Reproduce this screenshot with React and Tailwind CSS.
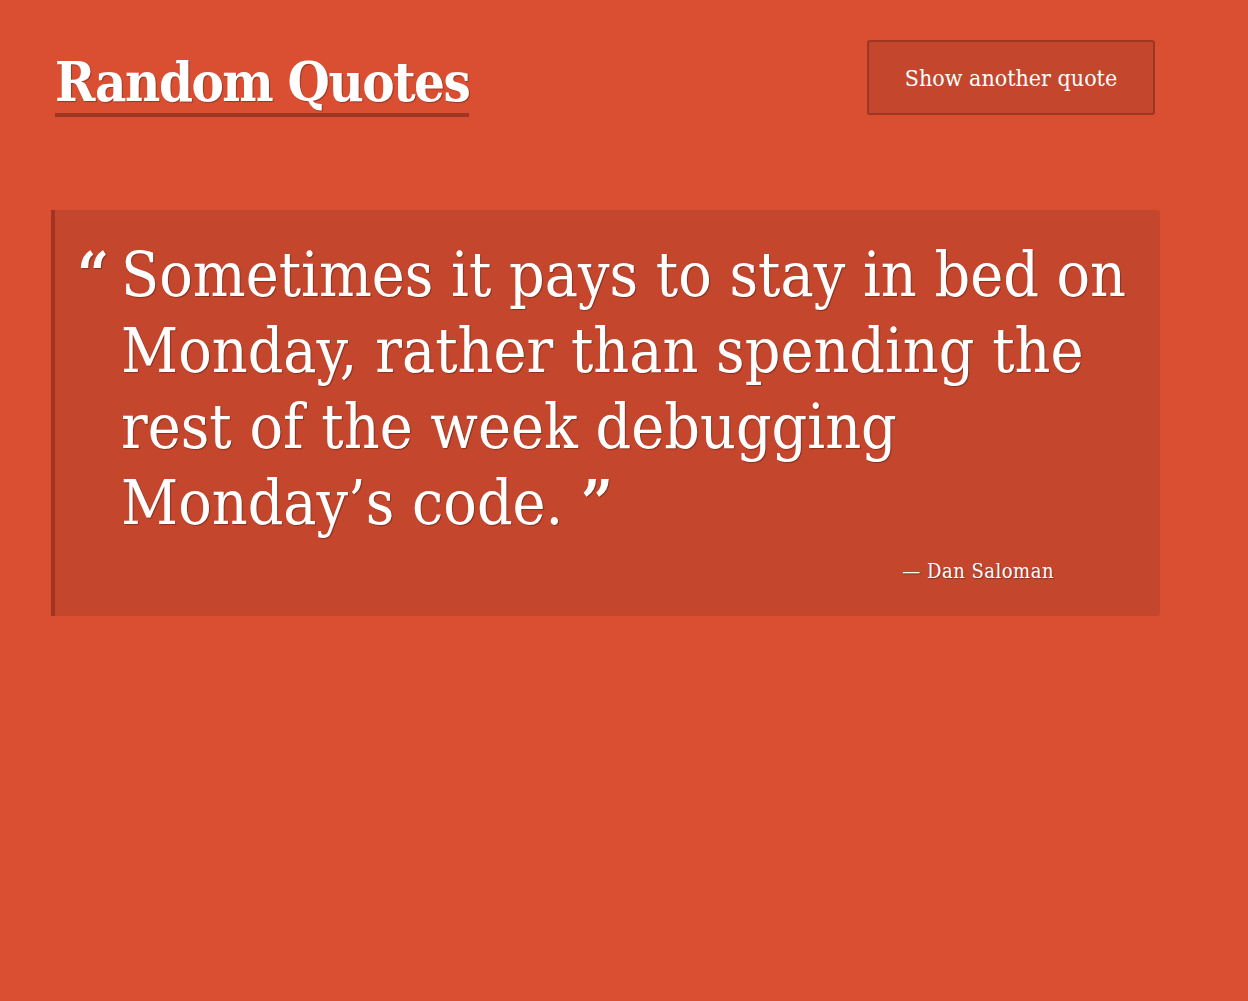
export default function App() {
  return (
    <div className="min-h-screen bg-[#da4f32] text-white font-['DejaVu_Serif_Condensed','DejaVu_Serif',serif] [text-shadow:1px_1px_1px_rgba(0,0,0,0.3)]">
      <div className="ml-[51px] w-[1109px] pt-[40px]">
        {/* HEADER */}
        <header className="flex items-start justify-between">
          <h1 className="ml-[4px] mt-[11px] border-b-4 border-[#9e3621] text-[54px] font-bold leading-[62px] tracking-[-1.5px]">
            Random Quotes
          </h1>
          <button className="mr-[5px] h-[75px] w-[288px] rounded-[3px] border-2 border-[#9e3621] bg-[#c3462d] pt-[2px] text-[23px] text-white">
            Show another quote
          </button>
        </header>

        {/* QUOTE */}
        <blockquote className="mt-[93px] rounded-r-[3px] border-l-4 border-[#9e3621] bg-[#c3462d] pb-[33px] pt-[27px]">
          <div className="flex">
            <span className="w-[66px] shrink-0 pl-[22px] text-[62px] font-bold leading-[76px]">
              “
            </span>
            <p className="whitespace-nowrap text-[62px] leading-[76px]">
              Sometimes it pays to stay in bed on
              <br />
              Monday, rather than spending the
              <br />
              rest of the week debugging
              <br />
              Monday’s code. <span className="font-bold">”</span>
            </p>
          </div>
          <p className="mr-[106px] mt-[18px] text-right text-[20px] leading-[24px] tracking-[0.5px]">
            — Dan Saloman
          </p>
        </blockquote>
      </div>
    </div>
  );
}
